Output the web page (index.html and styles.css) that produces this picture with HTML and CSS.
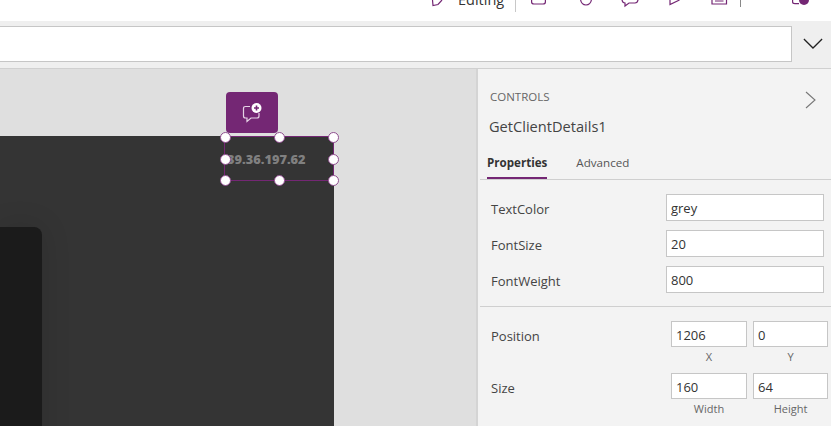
FILE: index.html
```html
<!DOCTYPE html>
<html lang="en">
<head>
<meta charset="utf-8">
<title>GetClientDetails1</title>
<link rel="stylesheet" href="styles.css">
</head>
<body>
<div class="app">
  <header class="topbar">
    <svg class="ico ico-pen" viewBox="0 0 16 8"><path d="M1.5 0 L2 5.5 L7 4.5 L11 0"/></svg>
    <span class="editing">Editing</span>
    <span class="sep sep-a"></span>
    <svg class="ico ico-a" viewBox="0 0 16 8"><path d="M0.6 0 V2 Q0.6 4 3 4 H12 Q14.4 4 14.4 2 V0"/></svg>
    <svg class="ico ico-b" viewBox="0 0 16 8"><path d="M0.6 0 Q1.5 5 6 5 Q10.5 5 11.4 0"/></svg>
    <svg class="ico ico-c" viewBox="0 0 20 8"><path d="M1 0 Q1.5 3 4 3 V6 L8 3 H14 Q16.5 3 17 0"/></svg>
    <svg class="ico ico-d" viewBox="0 0 16 8"><path d="M1 0 V4.5 L10.5 0"/></svg>
    <svg class="ico ico-e" viewBox="0 0 18 8"><path d="M1 0 V4 H15.5 V0 M4 1 H12.5"/></svg>
    <span class="sep sep-b"></span>
    <svg class="ico ico-f" viewBox="0 0 18 8"><path d="M0.6 0 V2 Q0.6 3.6 3 3.6 H7"/><circle class="dot" cx="12" cy="0" r="5"/></svg>
  </header>
  <div class="formula">
    <div class="formula-input"></div>
    <svg class="formula-caret" viewBox="0 0 22 12"><path d="M1 1 L11 11 L21 1"/></svg>
  </div>
  <main class="work">
    <section class="canvas">
      <div class="screen">
        <div class="card"></div>
      </div>
      <button class="comment">
        <svg viewBox="0 0 22 22" width="22" height="22">
          <path class="bubble" d="M9 4.5 H4.5 Q2.5 4.5 2.5 6.5 V14 Q2.5 16 4.5 16 H6 V19.5 L10 16 H16 Q18 16 18 14 V11"/>
          <circle class="plus-bg" cx="15.5" cy="6" r="5"/>
          <path class="plus" d="M15.5 3.5 V8.5 M13 6 H18"/>
        </svg>
      </button>
      <div class="selection">
        <span class="ip">39.36.197.62</span>
        <i class="h h-tl"></i><i class="h h-tc"></i><i class="h h-tr"></i>
        <i class="h h-ml"></i><i class="h h-mr"></i>
        <i class="h h-bl"></i><i class="h h-bc"></i><i class="h h-br"></i>
      </div>
    </section>
    <aside class="panel">
      <div class="panel-head">
        <div class="eyebrow-row">
          <span class="eyebrow">CONTROLS</span>
          <svg class="chev" viewBox="0 0 11 18"><path d="M1 1 L10 9 L1 17"/></svg>
        </div>
        <div class="name">GetClientDetails1</div>
      </div>
      <nav class="tabs">
        <span class="tab tab-on">Properties</span>
        <span class="tab">Advanced</span>
      </nav>
      <div class="props">
        <label class="prop"><span class="prop-label">TextColor</span><span class="field">grey</span></label>
        <label class="prop"><span class="prop-label">FontSize</span><span class="field">20</span></label>
        <label class="prop"><span class="prop-label">FontWeight</span><span class="field">800</span></label>
      </div>
      <div class="geom">
        <div class="geom-row">
          <span class="geom-label">Position</span>
          <div class="pair"><span class="field small">1206</span><small>X</small></div>
          <div class="pair"><span class="field small">0</span><small>Y</small></div>
        </div>
        <div class="geom-row">
          <span class="geom-label">Size</span>
          <div class="pair"><span class="field small">160</span><small>Width</small></div>
          <div class="pair"><span class="field small">64</span><small>Height</small></div>
        </div>
      </div>
    </aside>
  </main>
</div>
</body>
</html>
```

FILE: styles.css
```css
* { box-sizing: border-box; }
html, body { margin: 0; height: 100%; overflow: hidden; }
body { font-family: "Open Sans", "Noto Sans", sans-serif; color: #333; background: #f3f3f3; }
.app { width: 831px; height: 426px; display: flex; flex-direction: column; overflow: hidden; }

.topbar { height: 21px; flex: none; background: #fff; position: relative; overflow: hidden; }
.ico { position: absolute; top: 0; fill: none; stroke: #742774; stroke-width: 1.2; height: 8px; }
.ico-pen { left: 431px; width: 16px; }
.ico-a { left: 531px; width: 16px; }
.ico-b { left: 580px; width: 16px; }
.ico-c { left: 621px; width: 20px; }
.ico-d { left: 669px; width: 16px; }
.ico-e { left: 711px; width: 18px; }
.ico-f { left: 792px; width: 18px; }
.dot { fill: #742774; stroke: none; }
.editing { position: absolute; left: 458px; top: -10px; font-size: 14.5px; line-height: 19px; color: #333; }
.sep { position: absolute; top: 0; width: 1px; background: #c8c8c8; height: 12px; }
.sep-a { left: 515px; }
.sep-b { left: 740px; background: #888; height: 7px; }

.formula { height: 48px; flex: none; background: #efefef; border-bottom: 1px solid #d0d0d0; display: flex; padding-top: 5px; }
.formula-input { width: 792px; height: 36px; background: #fff; border: 1px solid #c6c6c6; border-left: 0; }
.formula-caret { width: 20px; height: 11px; margin: 12px 0 0 11px; fill: none; stroke: #222; stroke-width: 1.4; }

.work { flex: 1; display: flex; min-height: 0; }
.canvas { width: 476px; flex: none; background: #dfdfdf; position: relative; overflow: hidden; }
.screen { position: absolute; left: 0; top: 67px; width: 334px; height: 300px; background: #343434; }
.card { position: absolute; left: 0; top: 91px; width: 42px; height: 300px; background: #1b1b1b; border-radius: 0 8px 0 0; box-shadow: 0 0 30px rgba(0,0,0,.12); }
.comment { position: absolute; left: 226px; top: 23px; width: 52px; height: 41px; padding: 0; border: 0; border-radius: 4px; background: #742774; display: flex; align-items: center; justify-content: center; }
.bubble { fill: none; stroke: #e4d3e4; stroke-width: 1.2; }
.plus-bg { fill: #fff; }
.plus { stroke: #742774; stroke-width: 1.6; fill: none; }
.selection { position: absolute; left: 224px; top: 67px; width: 110px; height: 45px; border: 1px solid #742774; display: flex; align-items: center; padding-left: 2px; }
.ip { font-size: 12.8px; font-weight: 800; color: #808080; white-space: nowrap; }
.h { position: absolute; width: 11px; height: 11px; border-radius: 50%; background: #fff; border: 1px solid #8f4f8f; margin: -5.5px 0 0 -5.5px; }
.h-tl { left: 0; top: 0; } .h-tc { left: 54px; top: 0; } .h-tr { left: 108px; top: 0; }
.h-ml { left: 0; top: 22px; } .h-mr { left: 108px; top: 22px; }
.h-bl { left: 0; top: 43px; } .h-bc { left: 54px; top: 43px; } .h-br { left: 108px; top: 43px; }

.panel { flex: 1; background: #f3f3f3; border-left: 2px solid #d4d4d4; min-width: 0; padding-left: 2px; }
.panel-head { padding: 19px 0 0 10px; }
.eyebrow-row { display: flex; justify-content: space-between; align-items: center; height: 16px; padding-right: 15px; }
.eyebrow { font-size: 11.5px; color: #666; }
.chev { width: 11px; height: 18px; margin-top: 8px; fill: none; stroke: #777; stroke-width: 1.1; }
.name { font-size: 14.6px; margin-top: 12px; line-height: 20px; color: #444; margin-left: -1px; }
.tabs { display: flex; gap: 29px; height: 28px; margin-top: 16px; padding-left: 7px; border-bottom: 1px solid #cfcfcf; font-size: 11.6px; }
.tab { color: #555; line-height: 20px; height: 27px; padding-top: 1px; }
.tab-on { font-weight: 700; color: #333; border-bottom: 2px solid #742774; }
.props { display: flex; flex-direction: column; gap: 9px; padding: 14px 7px 13px 11px; border-bottom: 1px solid #cfcfcf; }
.prop { display: flex; justify-content: space-between; align-items: center; font-size: 13px; color: #444; }
.prop-label { padding-top: 2px; }
.field { display: block; width: 158px; height: 27px; background: #fff; border: 1px solid #c6c6c6; font-size: 13px; line-height: 27px; padding-left: 4px; color: #333; }
.geom { padding: 14px 3px 0 11px; display: flex; flex-direction: column; gap: 6px; }
.geom-row { display: flex; gap: 6px; }
.geom-label { flex: 1; font-size: 13px; color: #444; line-height: 30px; }
.pair { display: flex; flex-direction: column; align-items: center; }
.field.small { width: 76px; height: 26px; line-height: 26px; }
.pair + .pair .field.small { width: 75px; }
.pair small { font-size: 11px; line-height: 20px; color: #666; }
```
